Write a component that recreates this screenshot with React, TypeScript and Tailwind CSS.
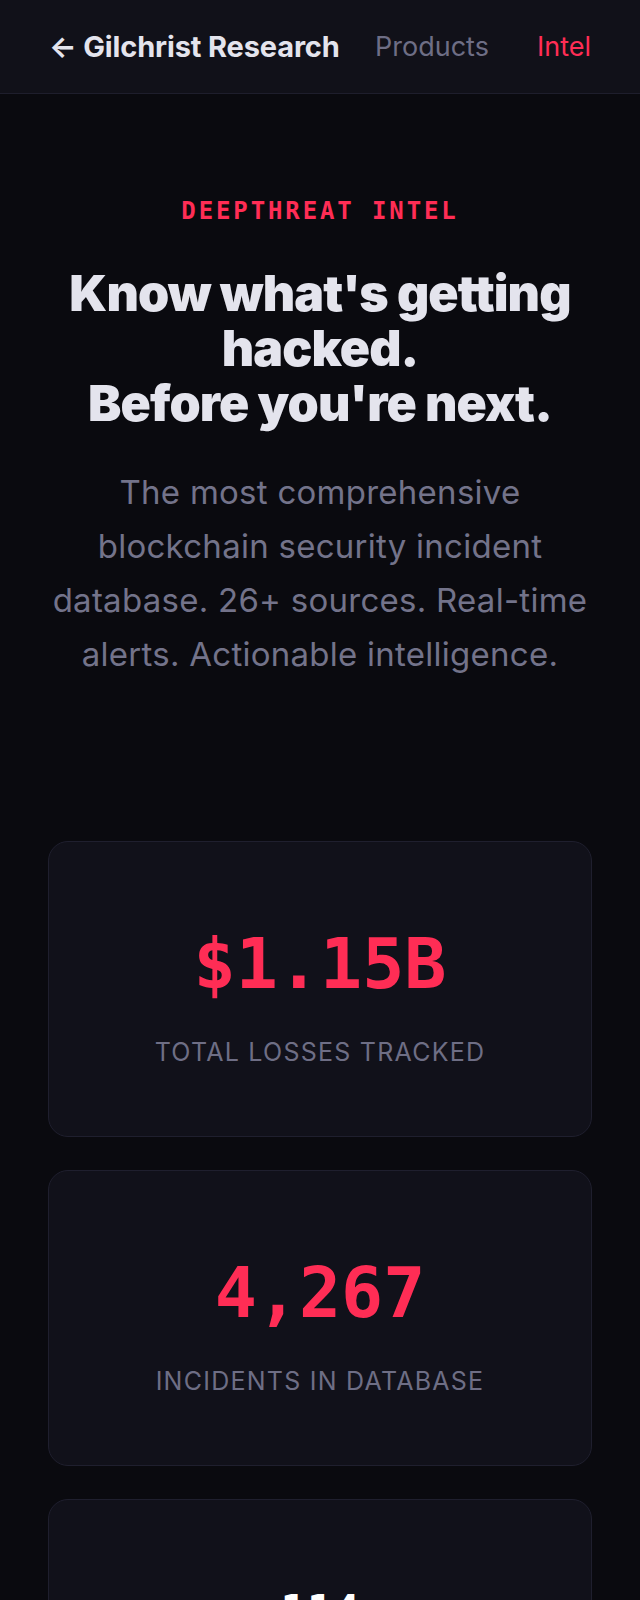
import React from "react";

const stats = [
  { value: "$1.15B", label: "TOTAL LOSSES TRACKED", color: "text-[#ff2d55]" },
  { value: "4,267", label: "INCIDENTS IN DATABASE", color: "text-[#ff2d55]" },
];

export default function App() {
  return (
    <div
      className="min-h-[1600px] bg-[#0a0a0f] text-[#e4e4ed]"
      style={{ fontFamily: "Inter, 'Noto Sans', sans-serif" }}
    >
      <header className="h-[94px] bg-[#111119] border-b border-[#1e1e2c] flex items-center justify-between pl-[49px] pr-[49px]">
        <a className="text-[29px] font-bold tracking-[-0.005em] text-[#e4e4ed] leading-none">
          ← Gilchrist Research
        </a>
        <nav className="flex items-center gap-[48px] text-[27px] leading-none">
          <span className="text-[#6e6e85]">Products</span>
          <span className="text-[#ff2d55]">Intel</span>
        </nav>
      </header>

      <section className="pt-[101px] px-12 text-center">
        <div
          className="text-[24px] leading-[32px] tracking-[0.12em] font-bold text-[#ff2d55]"
          style={{ fontFamily: "'DejaVu Sans Mono', monospace" }}
        >
          DEEPTHREAT INTEL
        </div>
        <h1 className="mt-[39px] -mx-4 text-[50px] leading-[55px] font-black tracking-[-0.018em] text-[#e4e4ed]">
          Know what's getting hacked.
          <br />
          Before you're next.
        </h1>
        <p className="mt-[34px] -mx-2 text-[33px] leading-[54px] tracking-[0.008em] text-[#73738a]">
          The most comprehensive blockchain security incident database. 26+
          sources. Real-time alerts. Actionable intelligence.
        </p>
      </section>

      <section className="mt-[160px] px-12 flex flex-col gap-[33px]">
        {stats.map((s) => (
          <div
            key={s.label}
            className="rounded-[20px] border border-[#1f1f2e] bg-[#11111a] pt-[87px] pb-[68px] flex flex-col items-center"
          >
            <div
              className={`text-[70px] leading-none font-bold ${s.color}`}
              style={{ fontFamily: "'DejaVu Sans Mono', monospace" }}
            >
              {s.value}
            </div>
            <div className="mt-[37px] text-[25px] leading-[32px] tracking-[0.05em] text-[#6e6e85]">
              {s.label}
            </div>
          </div>
        ))}
        <div className="rounded-[20px] border border-[#1f1f2e] bg-[#11111a] pt-[76px] pb-[71px] flex flex-col items-center">
          <div
            className="text-[44px] leading-[72px] font-bold text-white"
            style={{ fontFamily: "'DejaVu Sans Mono', monospace" }}
          >
            114
          </div>
          <div className="mt-[37px] text-[25px] leading-[32px] tracking-[0.05em] text-[#6e6e85]">
            SOURCES MONITORED
          </div>
        </div>
      </section>
    </div>
  );
}
